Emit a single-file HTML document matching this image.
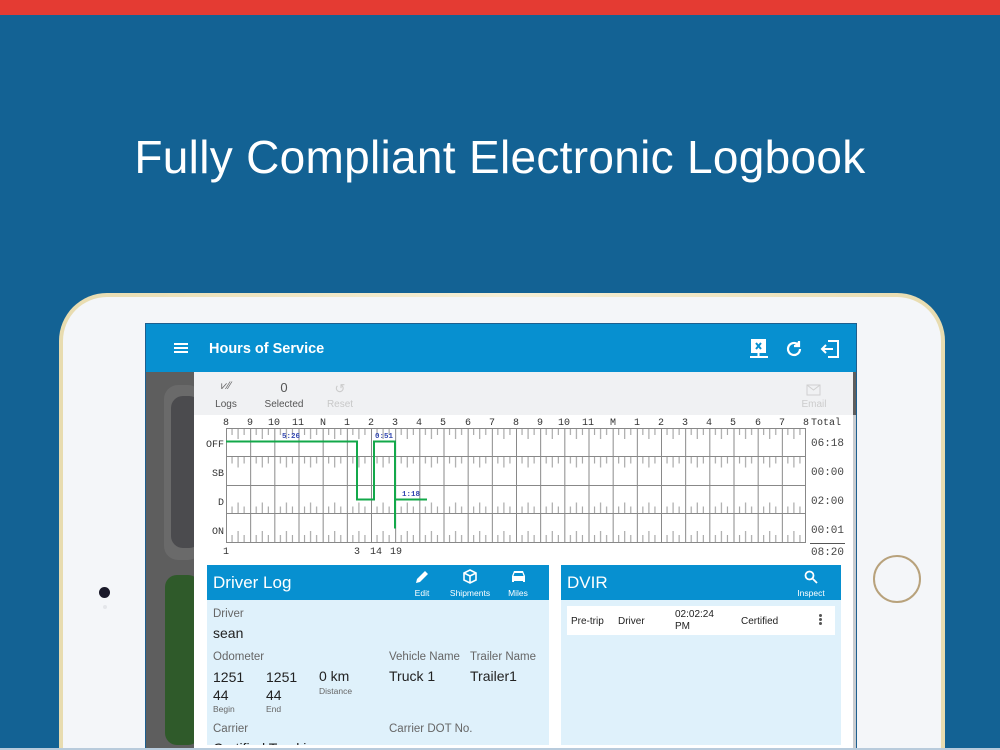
<!DOCTYPE html>
<html style="width:1000px;height:750px;overflow:hidden"><head><meta charset="utf-8"><style>
*{margin:0;padding:0;box-sizing:border-box}
body{width:1000px;height:750px;overflow:hidden;background:#136294;font-family:"Liberation Sans",sans-serif;position:relative}
.abs{position:absolute}
.red{left:0;top:0;width:1000px;height:15px;background:#e43b33}
h1{position:absolute;left:0;top:130px;width:1000px;text-align:center;color:#fff;font-weight:normal;font-size:46px;letter-spacing:0.3px}
.ipad{left:59px;top:293px;width:886px;height:457px;border-radius:48px 48px 0 0;background:linear-gradient(90deg,#e8dcb0,#f6efd6 50%,#e8dcb0);}
.face{left:63px;top:297px;width:878px;height:453px;border-radius:44px 44px 0 0;background:#f4f6f9}
.screen{left:145px;top:323px;width:712px;height:427px;background:#5e5e5e;border:1px solid #1d5f8f;border-bottom:none}
.bar{left:146px;top:324px;width:710px;height:48px;background:#0790d0;color:#fff}
.main{left:194px;top:372px;width:659px;height:378px;background:#fff}
.tool{left:194px;top:372px;width:659px;height:43px;background:#f0f1f3}
.t{position:absolute;font-size:10px;color:#555;text-align:center}
.card{position:absolute;background:#dff1fb;overflow:hidden}
.ch{position:absolute;left:0;top:0;right:0;height:35px;background:#0790d0;color:#fff}
.lbl{position:absolute;font-size:11.5px;color:#666}
.val{position:absolute;font-size:14px;color:#222}
.sm{position:absolute;font-size:8.5px;color:#666}
.ic{position:absolute;font-size:8.5px;color:#fff;text-align:center}
</style></head><body>
<div class="abs red"></div>
<h1>Fully Compliant Electronic Logbook</h1>
<div class="abs ipad"></div>
<div class="abs face"></div>
<div class="abs" style="left:99px;top:587px;width:11px;height:11px;border-radius:50%;background:#1a1a2a"></div>
<div class="abs" style="left:103px;top:605px;width:4px;height:4px;border-radius:50%;background:#e4e6ea"></div>
<div class="abs" style="left:873px;top:555px;width:48px;height:48px;border-radius:50%;border:2px solid #b8a27c"></div>
<div class="abs screen"></div>
<div class="abs" style="left:164px;top:385px;width:38px;height:175px;border-radius:14px;background:#6a6a6a"></div>
<div class="abs" style="left:171px;top:396px;width:30px;height:152px;border-radius:12px;background:#4b4b4e"></div>
<div class="abs" style="left:165px;top:575px;width:35px;height:170px;border-radius:12px;background:#2f5a2a"></div>
<div class="abs bar">
 <div class="abs" style="left:28px;top:19px;width:14px;height:2px;background:#fff;box-shadow:0 4px 0 #fff,0 8px 0 #fff"></div>
 <div class="abs" style="left:63px;top:17px;font-size:14.5px;font-weight:bold">Hours of Service</div>
 <svg class="abs" style="left:602px;top:14px" width="22" height="22" viewBox="0 0 22 22" fill="none" stroke="#fff" stroke-width="2"><rect x="4" y="2" width="13" height="12" fill="#fff"/><path d="M8 5l5 6M13 5l-5 6" stroke="#0790d0"/><path d="M10.5 14v4M2 19h18"/></svg>
 <svg class="abs" style="left:638px;top:15px" width="20" height="20" viewBox="0 0 20 20" fill="none" stroke="#fff" stroke-width="2.2"><path d="M16 10a6 6 0 1 1-2-4.5"/><path d="M15 2v5h-5" fill="#fff"/></svg>
 <svg class="abs" style="left:673px;top:14px" width="22" height="22" viewBox="0 0 22 22" fill="none" stroke="#fff" stroke-width="2"><path d="M9 3h10v16H9"/><path d="M14 11H3M7 7l-4 4 4 4"/></svg>
</div>
<div class="abs main"></div>
<div class="abs tool">
 <div class="t" style="left:20px;top:8px;width:24px;font-size:11px;color:#666">⩗⁄⁄</div>
 <div class="t" style="left:12px;top:27px;width:40px">Logs</div>
 <div class="t" style="left:65px;top:8px;width:50px;font-size:13px">0</div>
 <div class="t" style="left:60px;top:27px;width:60px">Selected</div>
 <div class="t" style="left:131px;top:9px;width:30px;font-size:13px;color:#ccc">↺</div>
 <div class="t" style="left:126px;top:27px;width:40px;color:#c8c8c8">Reset</div>
 <svg class="abs" style="left:612px;top:12px" width="15" height="12" viewBox="0 0 15 12" fill="none" stroke="#d0d0d0"><rect x="1" y="1" width="13" height="10"/><path d="M1 1l6.5 5L14 1"/></svg>
 <div class="t" style="left:600px;top:27px;width:40px;color:#ccc">Email</div>
</div>
<svg class="abs" style="left:194px;top:412px" width="659" height="150" viewBox="194 412 659 150" font-family="Liberation Mono, DejaVu Sans Mono, monospace">
 <defs>
  <pattern id="top" x="226" y="428" width="24.1667" height="28.5" patternUnits="userSpaceOnUse">
   <path d="M6.04 0v7M12.08 0v11M18.12 0v7" stroke="#999" stroke-width="1"/>
  </pattern>
  <pattern id="bot" x="226" y="428" width="24.1667" height="28.5" patternUnits="userSpaceOnUse">
   <path d="M6.04 28.5v-7M12.08 28.5v-11M18.12 28.5v-7" stroke="#999" stroke-width="1"/>
  </pattern>
  <pattern id="hr" x="226" y="428" width="24.1667" height="114" patternUnits="userSpaceOnUse">
   <path d="M0.5 0v114" stroke="#888" stroke-width="1"/>
  </pattern>
 </defs>
 <rect x="226" y="428" width="580" height="57" fill="url(#top)"/>
 <rect x="226" y="485" width="580" height="57" fill="url(#bot)"/>
 <rect x="226" y="428" width="580" height="114" fill="url(#hr)"/>
 <path d="M226 428.5h580M226 456.5h580M226 485.5h580M226 513.5h580M226 542.5h580M805.5 428v114" stroke="#888"/>
 <g font-size="10" fill="#333" text-anchor="middle">
  <text x="226" y="425">8</text><text x="250" y="425">9</text><text x="274" y="425">10</text><text x="298" y="425">11</text><text x="323" y="425">N</text><text x="347" y="425">1</text><text x="371" y="425">2</text><text x="395" y="425">3</text><text x="419" y="425">4</text><text x="443" y="425">5</text><text x="468" y="425">6</text><text x="492" y="425">7</text><text x="516" y="425">8</text><text x="540" y="425">9</text><text x="564" y="425">10</text><text x="588" y="425">11</text><text x="613" y="425">M</text><text x="637" y="425">1</text><text x="661" y="425">2</text><text x="685" y="425">3</text><text x="709" y="425">4</text><text x="733" y="425">5</text><text x="758" y="425">6</text><text x="782" y="425">7</text><text x="806" y="425">8</text>
 </g>
 <text x="811" y="425" font-size="10" fill="#333">Total</text>
 <g font-size="10" fill="#333" text-anchor="end">
  <text x="224" y="447">OFF</text><text x="224" y="476">SB</text><text x="224" y="505">D</text><text x="224" y="534">ON</text>
 </g>
 <g font-size="11" fill="#444">
  <text x="811" y="446">06:18</text><text x="811" y="475">00:00</text><text x="811" y="504">02:00</text><text x="811" y="533">00:01</text><text x="811" y="555">08:20</text>
 </g>
 <path d="M810 543.5h35" stroke="#555"/>
 <path d="M226 441.5h131v58h17v-58h21v87M395 499.5h32" stroke="#13a84a" stroke-width="2" fill="none"/>
 <g font-size="7.5" fill="#3448b0" font-weight="bold">
  <text x="282" y="438">5:26</text><text x="375" y="438">0:51</text><text x="402" y="496">1:18</text>
 </g>
 <g font-size="10" fill="#333" text-anchor="middle">
  <text x="226" y="554">1</text><text x="357" y="554">3</text><text x="376" y="554">14</text><text x="396" y="554">19</text>
 </g>
</svg>
<div class="abs" style="left:853px;top:415px;width:3px;height:335px;background:#c9ccd0"></div>
<div class="card" style="left:207px;top:565px;width:342px;height:180px">
 <div class="ch">
  <div class="abs" style="left:6px;top:8px;font-size:17px">Driver Log</div>
  <svg class="abs" style="left:208px;top:5px" width="14" height="14" viewBox="0 0 14 14" fill="#fff"><path d="M1 13l1-4 8-8 3 3-8 8z"/></svg>
  <div class="ic" style="left:200px;top:23px;width:30px">Edit</div>
  <svg class="abs" style="left:256px;top:4px" width="14" height="15" viewBox="0 0 14 15" fill="none" stroke="#fff" stroke-width="1.6"><path d="M7 1l6 3v7l-6 3-6-3V4zM1 4l6 3 6-3M7 7v7"/></svg>
  <div class="ic" style="left:238px;top:23px;width:50px">Shipments</div>
  <svg class="abs" style="left:304px;top:5px" width="15" height="13" viewBox="0 0 15 13" fill="#fff"><path d="M3 1h9l2 5v6h-2v-1H3v1H1V6zM3.5 3l-1 3h10l-1-3z"/></svg>
  <div class="ic" style="left:296px;top:23px;width:30px">Miles</div>
 </div>
 <div class="lbl" style="left:6px;top:43px">Driver</div>
 <div class="val" style="left:6px;top:60px">sean</div>
 <div class="lbl" style="left:6px;top:86px">Odometer</div>
 <div class="val" style="left:6px;top:103px;line-height:18px">1251<br>44</div>
 <div class="sm" style="left:6px;top:139px">Begin</div>
 <div class="val" style="left:59px;top:103px;line-height:18px">1251<br>44</div>
 <div class="sm" style="left:59px;top:139px">End</div>
 <div class="val" style="left:112px;top:103px">0 km</div>
 <div class="sm" style="left:112px;top:121px">Distance</div>
 <div class="lbl" style="left:182px;top:86px">Vehicle Name</div>
 <div class="val" style="left:182px;top:103px">Truck 1</div>
 <div class="lbl" style="left:263px;top:86px">Trailer Name</div>
 <div class="val" style="left:263px;top:103px">Trailer1</div>
 <div class="lbl" style="left:6px;top:158px">Carrier</div>
 <div class="lbl" style="left:182px;top:158px">Carrier DOT No.</div>
 <div class="val" style="left:6px;top:175px">Certified Trucking</div>
</div>
<div class="card" style="left:561px;top:565px;width:280px;height:180px">
 <div class="ch">
  <div class="abs" style="left:6px;top:8px;font-size:17px">DVIR</div>
  <svg class="abs" style="left:243px;top:5px" width="14" height="14" viewBox="0 0 14 14" fill="none" stroke="#fff" stroke-width="1.8"><circle cx="5.5" cy="5.5" r="4"/><path d="M8.5 8.5l4.5 4.5"/></svg>
  <div class="ic" style="left:230px;top:23px;width:40px">Inspect</div>
 </div>
 <div class="abs" style="left:6px;top:41px;width:268px;height:29px;background:#fff;font-size:10px;color:#222">
  <div class="abs" style="left:4px;top:10px">Pre-trip</div>
  <div class="abs" style="left:51px;top:10px">Driver</div>
  <div class="abs" style="left:108px;top:3px;line-height:12px">02:02:24<br>PM</div>
  <div class="abs" style="left:174px;top:10px">Certified</div>
  <div class="abs" style="left:252px;top:8px;width:3px;height:3px;border-radius:50%;background:#555;box-shadow:0 4px 0 #555,0 8px 0 #555"></div>
 </div>
</div>
<div class="abs" style="left:0;top:748px;width:1000px;height:2px;background:#b8cbdc"></div>
</body></html>
